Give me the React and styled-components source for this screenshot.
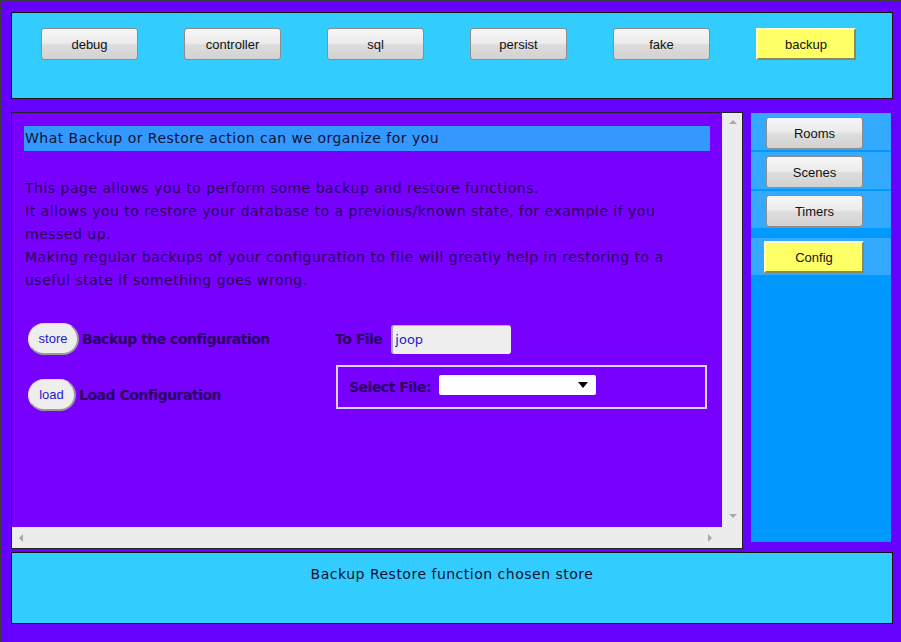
import React from "react";
import styled, { createGlobalStyle, css } from "styled-components";

const GlobalStyle = createGlobalStyle`
  html, body { margin: 0; padding: 0; background: #6600ff; }
  #root { width: 901px; height: 642px; }
`;

const comic = `"Comic Sans MS", "DejaVu Sans", sans-serif`;
const arial = `"Liberation Sans", Arial, sans-serif`;

const Page = styled.div`
  box-sizing: border-box;
  width: 901px;
  height: 642px;
  background: #6600ff;
  border-top: 1px solid #3a3a3a;
  border-left: 1px solid #3a3a3a;
  padding: 11px 0 0 10px;
  display: flex;
  flex-direction: column;
`;

const TopBar = styled.div`
  box-sizing: border-box;
  width: 882px;
  height: 87px;
  background: #33ccff;
  border: 1px solid #111;
  display: flex;
  align-items: flex-start;
  padding: 15px 0 0 29px;
  gap: 46px;
`;

const NavButton = styled.button`
  box-sizing: border-box;
  width: 97px;
  height: 32px;
  margin: 0;
  padding: 0;
  font-family: ${arial};
  font-size: 13px;
  color: #111;
  border: 1px solid #8c8c8c;
  border-radius: 3px;
  background: linear-gradient(#f6f6f6 0%, #ececec 45%, #dcdcdc 55%, #d2d2d2 100%);
  cursor: pointer;
  ${(p) =>
    p.$active &&
    css`
      width: 100px;
      background: #ffff66;
      border: 2px solid;
      border-color: #ffffcc #8a8a55 #8a8a55 #ffffcc;
      border-radius: 0;
    `}
`;

const MiddleRow = styled.div`
  display: flex;
  gap: 8px;
  margin-top: 13px;
  align-items: flex-start;
`;

const MainPanel = styled.div`
  box-sizing: border-box;
  width: 732px;
  height: 437px;
  border: 1px solid #222;
  background: #ececec;
  display: grid;
  grid-template-columns: 1fr 20px;
  grid-template-rows: 1fr 21px;
`;

const Content = styled.div`
  background: #7700ff;
  padding: 13px 12px 0 12px;
  overflow: hidden;
  font-family: ${comic};
  color: #2a0055;
`;

const Title = styled.div`
  height: 25px;
  line-height: 25px;
  background: #3399ff;
  color: #111133;
  font-size: 14px;
  letter-spacing: 0.47px;
  padding-left: 1px;
  white-space: nowrap;
`;

const Paragraph = styled.p`
  margin: 26px 0 0 1px;
  font-size: 14px;
  letter-spacing: 0.5px;
  line-height: 23px;
  white-space: nowrap;
`;

const ActionRow = styled.div`
  display: flex;
  align-items: ${(p) => p.$align || "center"};
  margin-top: ${(p) => p.$top}px;
`;

const LeftCell = styled.div`
  display: flex;
  align-items: center;
  width: 307px;
  margin-left: 4px;
  ${(p) => p.$offset && css`margin-top: ${p.$offset}px;`}
`;

const PillButton = styled.button`
  box-sizing: border-box;
  height: 32px;
  width: ${(p) => p.$w}px;
  padding: 0;
  margin: 0 3px 0 0;
  background: #eeeeee;
  color: #1a1acc;
  font-family: ${arial};
  font-size: 13px;
  border: 1px solid #ddd;
  border-right: 2px solid #9a9a9a;
  border-bottom: 2px solid #9a9a9a;
  border-radius: 16px;
`;

const ActionLabel = styled.span`
  font-size: 14px;
  font-weight: bold;
  letter-spacing: -0.5px;
  color: #2a0060;
`;

const ToFileLabel = styled(ActionLabel)`
  margin-right: 9px;
`;

const TextInput = styled.input`
  box-sizing: border-box;
  width: 120px;
  height: 29px;
  background: #eeeeee;
  border: none;
  border-left: 2px solid #aaa;
  border-top: 1px solid #bbb;
  border-radius: 3px;
  padding: 0 0 0 2px;
  font-family: ${comic};
  font-size: 13px;
  color: #1a1acc;
  outline: none;
`;

const FileBox = styled.fieldset`
  box-sizing: border-box;
  width: 371px;
  height: 44px;
  margin: 0 0 0 1px;
  border: 2px solid #e0d0ff;
  padding: 0 0 0 11px;
  display: flex;
  align-items: center;
  gap: 8px;
`;

const SelectWrap = styled.div`
  box-sizing: border-box;
  width: 157px;
  height: 20px;
  background: #fff;
  border-radius: 2px;
  display: flex;
  justify-content: flex-end;
  align-items: center;
  padding-right: 8px;
  margin-top: -5px;
`;

const VScroll = styled.div`
  display: flex;
  flex-direction: column;
  justify-content: space-between;
  align-items: center;
  padding: 6px 0 8px;
  border-left: 1px solid #e4e4e4;
`;

const HScroll = styled.div`
  display: flex;
  justify-content: space-between;
  align-items: center;
  padding: 0 9px 0 6px;
`;

const Corner = styled.div`
  background: #ececec;
`;

const Sidebar = styled.div`
  width: 140px;
  height: 429px;
  margin-top: 1px;
  background: #0099ff;
  display: flex;
  flex-direction: column;
`;

const SideItem = styled.div`
  height: 37px;
  background: #33aaff;
  margin-bottom: ${(p) => p.$gap}px;
  padding: ${(p) => (p.$active ? "3px 0 0 13px" : "4px 0 0 15px")};
  box-sizing: border-box;
`;

const SideButton = styled(NavButton)`
  height: 32px;
`;

const Footer = styled.div`
  box-sizing: border-box;
  width: 882px;
  height: 72px;
  margin-top: 3px;
  background: #33ccff;
  border: 1px solid #111;
  text-align: center;
  padding-top: 13px;
  font-family: ${comic};
  font-size: 14px;
  letter-spacing: 0.5px;
  color: #111133;
`;

const Arrow = ({ dir }) => {
  const pts = {
    up: "0,5 4,1 8,5",
    down: "0,1 4,5 8,1",
    left: "5,0 1,4 5,8",
    right: "1,0 5,4 1,8",
  }[dir];
  const vertical = dir === "up" || dir === "down";
  return (
    <svg width={vertical ? 8 : 6} height={vertical ? 6 : 8}>
      <polygon points={pts} fill="#a8a8a8" />
    </svg>
  );
};

const navItems = ["debug", "controller", "sql", "persist", "fake", "backup"];

const paragraphLines = [
  "This page allows you to perform some backup and restore functions.",
  "It allows you to restore your database to a previous/known state, for example if you",
  "messed up.",
  "Making regular backups of your configuration to file will greatly help in restoring to a",
  "useful state if something goes wrong.",
];

export default function App() {
  return (
    <>
      <GlobalStyle />
      <Page>
        <TopBar>
          {navItems.map((n) => (
            <NavButton key={n} $active={n === "backup"}>
              {n}
            </NavButton>
          ))}
        </TopBar>
        <MiddleRow>
          <MainPanel>
            <Content>
              <Title>What Backup or Restore action can we organize for you</Title>
              <Paragraph>
                {paragraphLines.map((l, i) => (
                  <React.Fragment key={i}>
                    {l}
                    {i < paragraphLines.length - 1 && <br />}
                  </React.Fragment>
                ))}
              </Paragraph>
              <ActionRow $top={31}>
                <LeftCell>
                  <PillButton $w={51}>store</PillButton>
                  <ActionLabel>Backup the configuration</ActionLabel>
                </LeftCell>
                <ToFileLabel>To File</ToFileLabel>
                <TextInput defaultValue="joop" readOnly />
              </ActionRow>
              <ActionRow $top={10} $align="flex-start">
                <LeftCell $offset={14}>
                  <PillButton $w={48}>load</PillButton>
                  <ActionLabel>Load Configuration</ActionLabel>
                </LeftCell>
                <FileBox>
                  <ActionLabel>Select File:</ActionLabel>
                  <SelectWrap>
                    <svg width="10" height="6">
                      <polygon points="0,0 10,0 5,6" fill="#000" />
                    </svg>
                  </SelectWrap>
                </FileBox>
              </ActionRow>
            </Content>
            <VScroll>
              <Arrow dir="up" />
              <Arrow dir="down" />
            </VScroll>
            <HScroll>
              <Arrow dir="left" />
              <Arrow dir="right" />
            </HScroll>
            <Corner />
          </MainPanel>
          <Sidebar>
            <SideItem $gap={2}>
              <SideButton>Rooms</SideButton>
            </SideItem>
            <SideItem $gap={2}>
              <SideButton>Scenes</SideButton>
            </SideItem>
            <SideItem $gap={10}>
              <SideButton>Timers</SideButton>
            </SideItem>
            <SideItem $gap={0} $active>
              <SideButton $active>Config</SideButton>
            </SideItem>
          </Sidebar>
        </MiddleRow>
        <Footer>Backup Restore function chosen store</Footer>
      </Page>
    </>
  );
}
